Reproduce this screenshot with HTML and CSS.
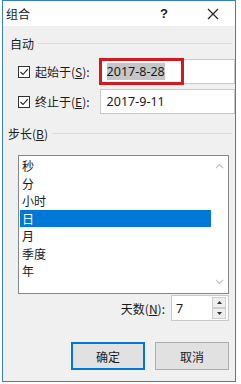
FILE: index.html
```html
<!DOCTYPE html>
<html lang="zh-CN">
<head>
    <meta charset="utf-8">
    <title>组合</title>
    <link rel="stylesheet" href="styles.css">
</head>
<body>
    <div class="dialog">
        <!-- Title bar -->
        <div class="titlebar">
            <span class="title">组合</span>
            <span class="help">?</span>
            <svg class="close" width="12" height="12" viewBox="0 0 12 12">
                <path d="M1 1 L11 11 M11 1 L1 11" stroke="#222" stroke-width="1.2" fill="none"/>
            </svg>
        </div>

        <div class="body">
            <!-- Auto group -->
            <div class="group-head"><span>自动</span><div class="rule"></div></div>

            <div class="date-row first">
                <label class="check">
                    <svg width="12" height="12" viewBox="0 0 12 12">
                        <rect x="0.5" y="0.5" width="11" height="11" fill="#fff" stroke="#333"/>
                        <path d="M2.5 6 L5 8.5 L9.8 3.2" stroke="#222" stroke-width="1.1" fill="none"/>
                    </svg>
                    <span>起始于(<u>S</u>):</span>
                </label>
                <div class="field">
                    <span class="selected-text">2017-8-28</span>
                    <div class="mark"></div>
                </div>
            </div>

            <div class="date-row">
                <label class="check">
                    <svg width="12" height="12" viewBox="0 0 12 12">
                        <rect x="0.5" y="0.5" width="11" height="11" fill="#fff" stroke="#333"/>
                        <path d="M2.5 6 L5 8.5 L9.8 3.2" stroke="#222" stroke-width="1.1" fill="none"/>
                    </svg>
                    <span>终止于(<u>E</u>):</span>
                </label>
                <div class="field">
                    <span>2017-9-11</span>
                </div>
            </div>

            <!-- Step group -->
            <div class="group-head step"><span>步长(<u>B</u>)</span><div class="rule"></div></div>

            <div class="listbox">
                <ul class="items">
                    <li>秒</li>
                    <li>分</li>
                    <li>小时</li>
                    <li class="active">日</li>
                    <li>月</li>
                    <li>季度</li>
                    <li>年</li>
                </ul>
                <div class="scrollbar">
                    <svg width="9" height="6" viewBox="0 0 9 6"><path d="M1 5 L4.5 1.5 L8 5" stroke="#c4c4c4" fill="none" stroke-width="1.2"/></svg>
                    <svg width="9" height="6" viewBox="0 0 9 6"><path d="M1 1 L4.5 4.5 L8 1" stroke="#c4c4c4" fill="none" stroke-width="1.2"/></svg>
                </div>
            </div>

            <div class="days-row">
                <span class="days-label">天数(<u>N</u>):</span>
                <div class="spin">
                    <span class="spin-value">7</span>
                    <div class="spin-buttons">
                        <div class="spin-btn"><svg width="5" height="3" viewBox="0 0 5 3"><path d="M0 3 L2.5 0 L5 3 Z" fill="#333"/></svg></div>
                        <div class="spin-btn"><svg width="5" height="3" viewBox="0 0 5 3"><path d="M0 0 L2.5 3 L5 0 Z" fill="#333"/></svg></div>
                    </div>
                </div>
            </div>

            <div class="actions">
                <button class="btn default">确定</button>
                <button class="btn">取消</button>
            </div>
        </div>
    </div>
</body>
</html>
```

FILE: styles.css
```css
body {
    margin: 0;
    width: 241px;
    height: 384px;
    overflow: hidden;
    background-color: #ffffff;
    font-family: "Noto Sans CJK SC", "Noto Sans", sans-serif;
    font-size: 12px;
    color: #1a1a1a;
}

.dialog {
    margin-left: 2px;
    width: 232px;
    height: 380px;
    border: 1px solid #3a7fc0;
    background-color: #f0f0f0;
    display: flex;
    flex-direction: column;
}

/* Title bar */
.titlebar {
    height: 25px;
    background-color: #ffffff;
    display: flex;
    align-items: center;
    padding-left: 3px;
}

.title {
    flex-grow: 1;
    font-size: 12px;
}

.help {
    font-family: "Liberation Sans", sans-serif;
    font-weight: bold;
    font-size: 13px;
    margin-right: 39px;
}

.close {
    margin-right: 16px;
}

.body {
    flex-grow: 1;
    display: flex;
    flex-direction: column;
}

/* Group headers */
.group-head {
    display: flex;
    align-items: center;
    padding: 8px 3px 0 7px;
    height: 18px;
}

.group-head .rule {
    flex-grow: 1;
    height: 1px;
    background-color: #dcdcdc;
    margin-left: 4px;
}

.group-head.step {
    padding-top: 10px;
    padding-left: 5px;
}

/* Date rows */
.date-row {
    display: flex;
    align-items: center;
    height: 25px;
    margin-top: 5px;
    padding-left: 15px;
}

.date-row.first {
    margin-top: 7px;
}

.check {
    display: flex;
    align-items: center;
    width: 82px;
}

.check svg {
    margin-right: 5px;
}

.field {
    position: relative;
    width: 128px;
    height: 23px;
    border: 1px solid #c9c9c9;
    background-color: #ffffff;
    display: flex;
    align-items: center;
    padding-left: 6px;
    font-family: "Noto Sans", sans-serif;
    font-size: 12.5px;
}

.selected-text {
    background-color: #c6c6c6;
    line-height: 17px;
}

/* Red annotation box over the start date */
.mark {
    position: absolute;
    left: -2px;
    top: -2px;
    width: 79px;
    height: 21px;
    border: 3px solid #d11a20;
}

/* List box */
.listbox {
    margin: 13px 6px 0 15px;
    height: 137px;
    border: 1px solid #828790;
    background-color: #ffffff;
    display: flex;
}

.items {
    list-style: none;
    margin: 0;
    padding: 1px 0 0 1px;
    flex-grow: 1;
}

.items li {
    height: 17.5px;
    line-height: 17px;
    padding-left: 2px;
}

.items li.active {
    background-color: #0078d7;
    color: #ffffff;
}

.scrollbar {
    width: 17px;
    display: flex;
    flex-direction: column;
    justify-content: space-between;
    align-items: center;
    padding: 7px 0 8px;
}

/* Days spinner */
.days-row {
    display: flex;
    justify-content: flex-end;
    align-items: center;
    margin-top: 1px;
    padding-right: 6px;
}

.days-label {
    margin-right: 6px;
}

.spin {
    width: 56px;
    height: 24px;
    border: 1px solid #c9c9c9;
    background-color: #ffffff;
    display: flex;
    align-items: center;
}

.spin-value {
    flex-grow: 1;
    padding-left: 4px;
    font-family: "Noto Sans", sans-serif;
    font-size: 12.5px;
}

.spin-buttons {
    width: 14px;
    height: 22px;
    margin-right: 2px;
    display: flex;
    flex-direction: column;
}

.spin-btn {
    flex-grow: 1;
    display: flex;
    align-items: center;
    justify-content: center;
    background-color: #efefef;
    border: 1px solid #d0d0d0;
}

/* Buttons */
.actions {
    display: flex;
    justify-content: flex-end;
    gap: 10px;
    margin-top: 21px;
    padding-right: 6px;
}

.btn {
    width: 74px;
    height: 28px;
    background-color: #e1e1e1;
    border: 1px solid #adadad;
    font-family: "Noto Sans CJK SC", sans-serif;
    font-size: 12px;
    color: #1a1a1a;
    padding: 0;
}

.btn.default {
    border: 2px solid #0078d7;
}
```
